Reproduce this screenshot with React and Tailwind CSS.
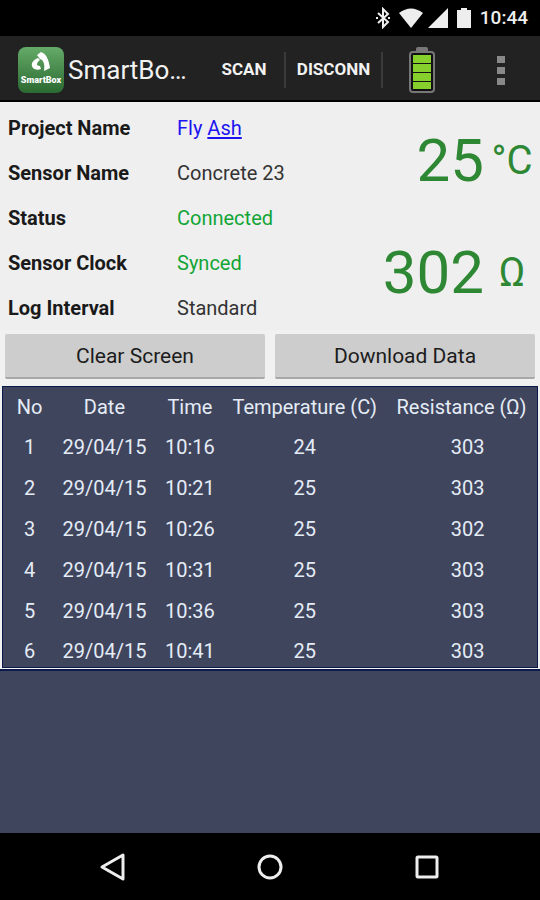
const details = [
  { label: 'Project Name', value: <>Fly <span className="underline underline-offset-2">Ash</span></>, tone: 'text-[#1c14f0]' },
  { label: 'Sensor Name', value: 'Concrete 23', tone: 'text-[#333333]' },
  { label: 'Status', value: 'Connected', tone: 'text-[#12a536]' },
  { label: 'Sensor Clock', value: 'Synced', tone: 'text-[#12a536]' },
  { label: 'Log Interval', value: 'Standard', tone: 'text-[#333333]' },
];

const readings = [
  [1, '29/04/15', '10:16', 24, 303],
  [2, '29/04/15', '10:21', 25, 303],
  [3, '29/04/15', '10:26', 25, 302],
  [4, '29/04/15', '10:31', 25, 303],
  [5, '29/04/15', '10:36', 25, 303],
  [6, '29/04/15', '10:41', 25, 303],
];

function StatusBar() {
  return (
    <div className="flex h-9 items-center justify-end bg-black pr-3 text-[#eeeeee]">
      <svg width="14" height="22" viewBox="0 0 14 22" className="mr-2" fill="none" stroke="currentColor" strokeWidth="2" aria-label="Bluetooth">
        <path d="M2 6 L12 15 L7 20 V2 L12 7 L2 16" />
        <path d="M0 10h2v2H0zM12 10h2v2h-2z" fill="currentColor" stroke="none" />
      </svg>
      <svg width="26" height="22" viewBox="0 0 26 22" fill="currentColor" aria-label="Wi-Fi">
        <path d="M1 6 Q13 -3 25 6 L13 21 Z" />
      </svg>
      <svg width="21" height="22" viewBox="0 0 21 22" fill="currentColor" className="ml-1" aria-label="Signal">
        <path d="M0 21 L20 1 V21 Z" />
      </svg>
      <svg width="15" height="22" viewBox="0 0 15 22" fill="currentColor" className="ml-2" aria-label="Battery">
        <path d="M4 1h6v2h4v18H0V3h4z" />
      </svg>
      <span className="ml-2 text-[19px] font-medium leading-6">10:44</span>
    </div>
  );
}

function AppLogo() {
  return (
    <div className="flex h-[46px] w-[46px] shrink-0 flex-col items-center rounded-lg bg-linear-to-b from-[#65ab68] to-[#2b6a32] pt-1">
      <svg width="24" height="24" viewBox="0 0 24 24" fill="white" aria-hidden="true">
        <path d="M8 4 L12 1 C18 3 20 10 21 17 L15 20 C16 14 15 9 11 8 Z" />
        <path d="M9 7 C4 9 1 13 4 17 C6 19 9 19 12 18 L11 15 C7 15 7 12 11 9 Z" />
      </svg>
      <span className="text-[9px] font-black leading-[10px] text-white">SmartBox</span>
    </div>
  );
}

function AppBar() {
  return (
    <header className="flex h-[66px] items-center border-b-2 border-black bg-[#222222] pt-1 text-[#f2f2f2]">
      <div className="ml-[18px] flex min-w-0 flex-1 items-center gap-1">
        <AppLogo />
        <h1 className="truncate text-[26px] leading-8">SmartBo…</h1>
      </div>
      <button className="h-9 w-20 text-[17px] font-bold">SCAN</button>
      <button className="h-9 w-[99px] border-x-2 border-[#3a3a3a] text-[17px] font-bold">DISCONN</button>
      <button className="flex w-[78px] justify-center" aria-label="Battery level">
        <svg width="28" height="48" viewBox="0 0 28 48">
          <rect x="8" y="1" width="12" height="6" rx="2" fill="#777" />
          <rect x="2" y="6" width="24" height="40" rx="3" fill="#111" stroke="#777" strokeWidth="2" />
          <path d="M5 9h18v8H5zM5 18h18v8H5zM5 27h18v8H5zM5 36h18v7H5z" fill="#87cf2d" />
        </svg>
      </button>
      <button className="flex w-[79px] justify-center" aria-label="More options">
        <svg width="8" height="30" viewBox="0 0 8 30" fill="#888888">
          <path d="M0 1h8v7H0zM0 12h8v7H0zM0 23h8v7H0z" />
        </svg>
      </button>
    </header>
  );
}

function Readout({ value, unit }) {
  return (
    <div className="flex items-center justify-end text-[#2d8733]">
      <span className="text-[60px] leading-[56px]">{value}</span>
      <span className="w-14 text-center text-[40px] leading-[56px]">{unit}</span>
    </div>
  );
}

function NavBar() {
  return (
    <nav className="flex h-[67px] items-center justify-between bg-black px-[98px]">
      <button aria-label="Back">
        <svg width="30" height="30" viewBox="0 0 30 30" fill="none" stroke="#eeeeee" strokeWidth="3" strokeLinejoin="round">
          <path d="M25 3 V27 L4 15 Z" />
        </svg>
      </button>
      <button aria-label="Home">
        <svg width="30" height="30" viewBox="0 0 30 30" fill="none" stroke="#eeeeee" strokeWidth="3">
          <circle cx="15" cy="15" r="11" />
        </svg>
      </button>
      <button aria-label="Recent apps">
        <svg width="30" height="30" viewBox="0 0 30 30" fill="none" stroke="#eeeeee" strokeWidth="3">
          <rect x="5" y="5" width="20" height="20" rx="1" />
        </svg>
      </button>
    </nav>
  );
}

export default function App() {
  return (
    <div className="flex min-h-screen flex-col bg-[#40455e] font-['Roboto',sans-serif]">
      <StatusBar />
      <AppBar />
      <main className="flex-1">
        <section className="flex justify-between bg-[#efefef] pt-[3px]">
          <dl className="pl-2 text-xl">
            {details.map((d) => (
              <div key={d.label} className="flex h-[45px] items-center">
                <dt className="w-[169px] font-bold text-[#1a1a1a]">{d.label}</dt>
                <dd className={d.tone}>{d.value}</dd>
              </div>
            ))}
          </dl>
          <div className="flex flex-col gap-14 pt-7">
            <Readout value="25" unit="°C" />
            <Readout value="302" unit="Ω" />
          </div>
        </section>
        <div className="grid grid-cols-2 gap-[10px] bg-[#f1f1f1] px-[5px] pt-1 pb-[7px] text-[21px] text-[#1c1c1c]">
          <button className="h-[45px] rounded-xs border-b-2 border-[#a8a8a8] bg-[#cdcdcd] pt-[2px]">Clear Screen</button>
          <button className="h-[45px] rounded-xs border-b-2 border-[#a8a8a8] bg-[#cdcdcd] pt-[2px]">Download Data</button>
        </div>
        <div className="border-b-2 border-[#0b1a4a] bg-[#f1f1f1] px-[2px] pb-px">
          <div className="overflow-hidden border border-[#0b1a4a] bg-[#40455e]">
            <table className="-mb-1 w-full table-fixed text-center text-xl text-[#e4ecf6]">
              <thead>
                <tr className="h-[39px]">
                  <th className="w-[10%] font-normal">No</th>
                  <th className="w-[18%] font-normal">Date</th>
                  <th className="w-[14%] font-normal">Time</th>
                  <th className="w-[29%] font-normal">Temperature (C)</th>
                  <th className="w-[29%] pl-1 font-normal">Resistance (Ω)</th>
                </tr>
              </thead>
              <tbody>
                {readings.map((row) => (
                  <tr key={row[0]} className="h-[41px] last:h-10">
                    {row.map((cell, i) => (
                      <td key={i} className="last:pl-4">{cell}</td>
                    ))}
                  </tr>
                ))}
              </tbody>
            </table>
          </div>
        </div>
      </main>
      <NavBar />
    </div>
  );
}
